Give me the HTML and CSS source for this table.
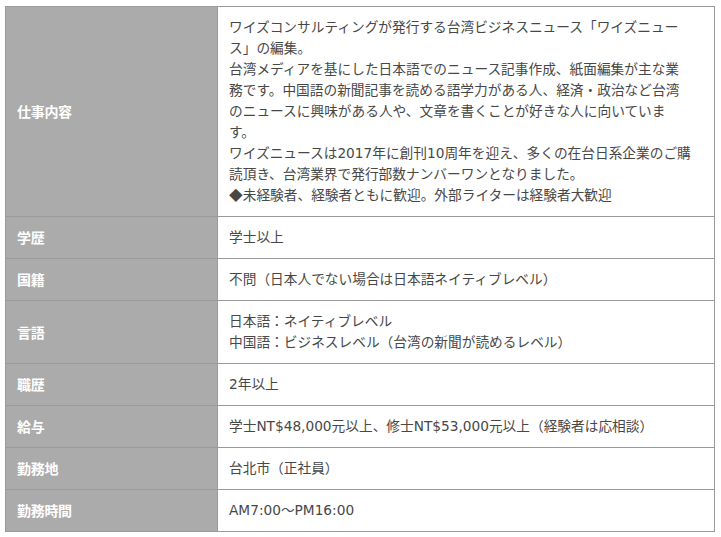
FILE: index.html
```html
<!DOCTYPE html>
<html lang="ja">
<head>
<meta charset="utf-8">
<title>募集要項</title>
<link rel="stylesheet" href="styles.css">
</head>
<body>
<table class="spec">
  <tr>
    <th class="label">仕事内容</th>
    <td class="value value-long">ワイズコンサルティングが発行する台湾ビジネスニュース「ワイズニュー<br>ス」の編集。<br>台湾メディアを基にした日本語でのニュース記事作成、紙面編集が主な業<br>務です。中国語の新聞記事を読める語学力がある人、経済・政治など台湾<br>のニュースに興味がある人や、文章を書くことが好きな人に向いていま<br>す。<br>ワイズニュースは2017年に創刊10周年を迎え、多くの在台日系企業のご購<br>読頂き、台湾業界で発行部数ナンバーワンとなりました。<br><span class="cjk">◆</span>未経験者、経験者ともに歓迎。外部ライターは経験者大歓迎</td>
  </tr>
  <tr>
    <th class="label">学歴</th>
    <td class="value">学士以上</td>
  </tr>
  <tr>
    <th class="label">国籍</th>
    <td class="value">不問（日本人でない場合は日本語ネイティブレベル）</td>
  </tr>
  <tr>
    <th class="label">言語</th>
    <td class="value">日本語：ネイティブレベル<br>中国語：ビジネスレベル（台湾の新聞が読めるレベル）</td>
  </tr>
  <tr>
    <th class="label">職歴</th>
    <td class="value">2年以上</td>
  </tr>
  <tr>
    <th class="label">給与</th>
    <td class="value">学士NT$48,000元以上、修士NT$53,000元以上（経験者は応相談）</td>
  </tr>
  <tr>
    <th class="label">勤務地</th>
    <td class="value">台北市（正社員）</td>
  </tr>
  <tr>
    <th class="label">勤務時間</th>
    <td class="value">AM7:00〜PM16:00</td>
  </tr>
</table>
</body>
</html>
```

FILE: styles.css
```css
html, body {
  margin: 0;
  padding: 0;
  background: #ffffff;
}

body {
  padding: 6px 6px 0 5px;
  font-family: "DejaVu Sans", "Noto Sans CJK JP", sans-serif;
  font-size: 13.7px;
  line-height: 21px;
  color: #474747;
}

.spec {
  border-collapse: collapse;
  width: 710px;
  table-layout: fixed;
  border: 1px solid #9a9a9a;
}

.label {
  width: 200px;
  background: #ababab;
  color: #ffffff;
  font-family: "Noto Sans CJK JP", sans-serif;
  font-size: 14px;
  font-weight: 700;
  text-align: left;
  vertical-align: middle;
  padding: 10px 0 10px 11px;
  border: 1px solid #9a9a9a;
  letter-spacing: -0.3px;
}

.value {
  padding: 10px 6px 10px 11px;
  border: 1px solid #9a9a9a;
  vertical-align: middle;
  text-spacing-trim: space-all;
}

.value-long {
  white-space: nowrap;
}

.cjk {
  font-family: "Noto Sans CJK JP", sans-serif;
  line-height: 0;
}
```
